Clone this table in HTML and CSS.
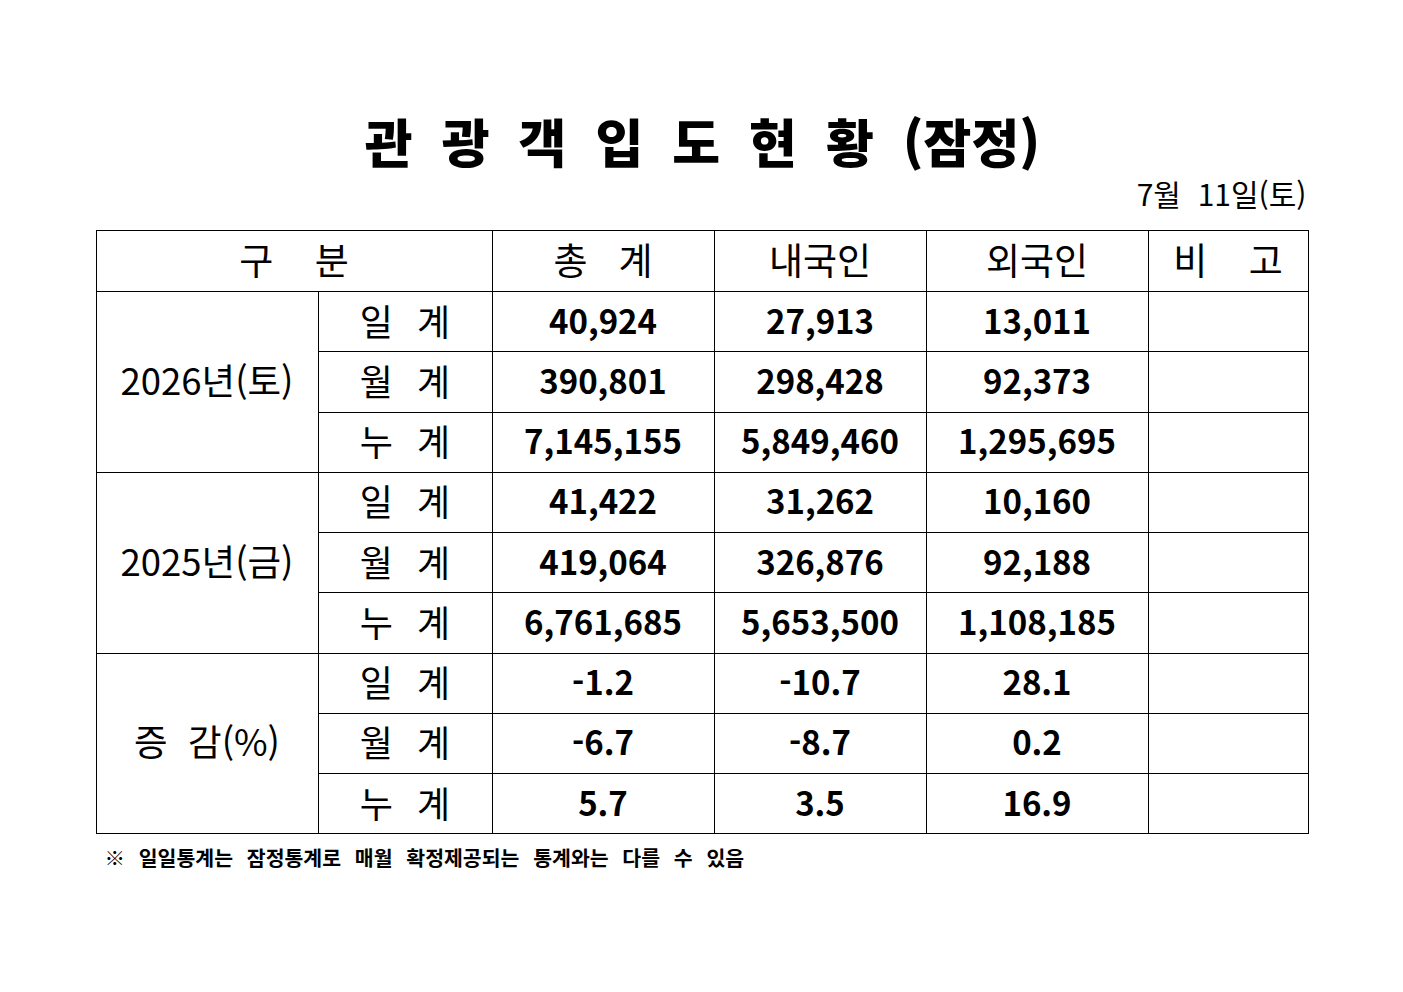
FILE: index.html
```html
<!DOCTYPE html>
<html lang="ko">
<head>
<meta charset="utf-8">
<title>관광객 입도 현황</title>
<link rel="stylesheet" href="styles.css">
</head>
<body>
<div class="page">
  <h1 class="title">
    <span>관</span><span>광</span><span>객</span><span>입</span><span>도</span><span>현</span><span>황</span><span>(잠정)</span>
  </h1>
  <div class="date">7월&nbsp;&nbsp;11일(토)</div>
  <table class="stats">
    <colgroup>
      <col class="c1"><col class="c2"><col class="c3"><col class="c4"><col class="c5"><col class="c6">
    </colgroup>
    <thead>
      <tr class="head">
        <th colspan="2" class="wide">구&nbsp;&nbsp;&nbsp;&nbsp;분</th>
        <th class="wide">총&nbsp;&nbsp;&nbsp;계</th>
        <th>내국인</th>
        <th>외국인</th>
        <th class="wide">비&nbsp;&nbsp;&nbsp;&nbsp;고</th>
      </tr>
    </thead>
    <tbody>
      <tr>
        <td rowspan="3" class="group">2026년(토)</td>
        <td class="label">일&nbsp;&nbsp;계</td>
        <td class="num">40,924</td><td class="num">27,913</td><td class="num">13,011</td><td></td>
      </tr>
      <tr>
        <td class="label">월&nbsp;&nbsp;계</td>
        <td class="num">390,801</td><td class="num">298,428</td><td class="num">92,373</td><td></td>
      </tr>
      <tr>
        <td class="label">누&nbsp;&nbsp;계</td>
        <td class="num">7,145,155</td><td class="num">5,849,460</td><td class="num">1,295,695</td><td></td>
      </tr>
      <tr>
        <td rowspan="3" class="group">2025년(금)</td>
        <td class="label">일&nbsp;&nbsp;계</td>
        <td class="num">41,422</td><td class="num">31,262</td><td class="num">10,160</td><td></td>
      </tr>
      <tr>
        <td class="label">월&nbsp;&nbsp;계</td>
        <td class="num">419,064</td><td class="num">326,876</td><td class="num">92,188</td><td></td>
      </tr>
      <tr>
        <td class="label">누&nbsp;&nbsp;계</td>
        <td class="num">6,761,685</td><td class="num">5,653,500</td><td class="num">1,108,185</td><td></td>
      </tr>
      <tr>
        <td rowspan="3" class="group">증&nbsp;&nbsp;감(%)</td>
        <td class="label">일&nbsp;&nbsp;계</td>
        <td class="num">-1.2</td><td class="num">-10.7</td><td class="num">28.1</td><td></td>
      </tr>
      <tr>
        <td class="label">월&nbsp;&nbsp;계</td>
        <td class="num">-6.7</td><td class="num">-8.7</td><td class="num">0.2</td><td></td>
      </tr>
      <tr>
        <td class="label">누&nbsp;&nbsp;계</td>
        <td class="num">5.7</td><td class="num">3.5</td><td class="num">16.9</td><td></td>
      </tr>
    </tbody>
  </table>
  <p class="note">※ 일일통계는 잠정통계로 매월 확정제공되는 통계와는 다를 수 있음</p>
</div>
</body>
</html>
```

FILE: styles.css
```css
html, body {
  margin: 0;
  padding: 0;
  background: #ffffff;
}

body {
  font-family: "Noto Sans CJK KR", "Noto Sans", sans-serif;
  color: #000000;
}

.page {
  width: 1212px;
  margin: 0 auto;
  padding-top: 110px;
}

.title {
  margin: 0;
  display: flex;
  justify-content: center;
  gap: 29px;
  font-size: 52px;
  font-weight: 900;
  line-height: 62px;
  height: 62px;
  padding-left: 2px;
}

.date {
  text-align: right;
  font-size: 30px;
  line-height: 34px;
  height: 34px;
  margin-top: 4px;
  padding-right: 1px;
}

.stats {
  margin-top: 20px;
  border-collapse: collapse;
  width: 1212px;
  table-layout: fixed;
}

.c1 { width: 222px; }
.c2 { width: 174px; }
.c3 { width: 222px; }
.c4 { width: 212px; }
.c5 { width: 222px; }
.c6 { width: 160px; }

.stats th,
.stats td {
  border: 1px solid #000000;
  padding: 0 0 4px 0;
  text-align: center;
  vertical-align: middle;
  height: 55.25px;
  line-height: 40px;
}

.stats th {
  font-weight: 400;
  font-size: 37px;
  height: 56px;
}

.group {
  font-size: 36.5px;
}

.label {
  font-size: 36px;
  word-spacing: 2px;
}

.num {
  font-size: 33px;
  font-weight: 700;
}

.note {
  margin: 10px 0 0 9px;
  font-size: 20.5px;
  font-weight: 700;
  word-spacing: 8px;
  line-height: 26px;
}
```
